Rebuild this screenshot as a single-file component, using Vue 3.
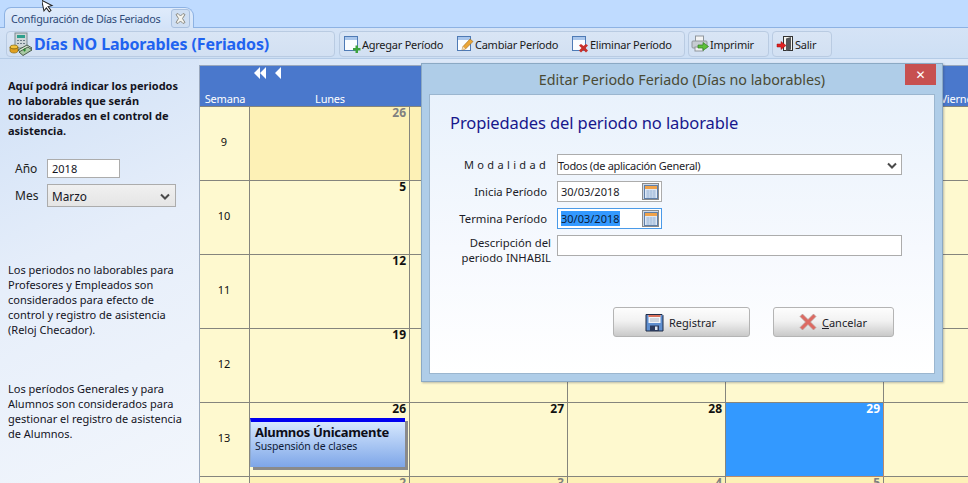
<script setup>
const o = (d) => ({ d, out: true })
const n = (d, extra = {}) => ({ d, ...extra })
const weeks = [
  { w: 9, days: [o(26), o(27), o(28), n(1), n(2)] },
  { w: 10, days: [n(5), n(6), n(7), n(8), n(9)] },
  { w: 11, days: [n(12), n(13), n(14), n(15), n(16)] },
  { w: 12, days: [n(19), n(20), n(21), n(22), n(23)] },
  { w: 13, days: [n(26, { ev: true }), n(27), n(28), n(29, { sel: true }), n(30)] },
  { w: 14, days: [o(2), o(3), o(4), o(5), o(6)] },
]
const heads = ['Lunes', 'Martes', 'Miércoles', 'Jueves', 'Viernes']
</script>

<template>
  <div class="page">
    <div class="tabstrip">
      <div class="tab">
        <span class="tabtext">Configuración de Días Feriados</span>
        <span class="tabclose">
          <svg width="13" height="13" viewBox="0 0 13 13"><path d="M2 2.500 4 1.500 6.500 4 9 1.500 11 2.500 8.500 6.500 11 10.500 9 11.500 6.500 9 4 11.500 2 10.500 4.500 6.500Z" fill="#f4f4ee" stroke="#8b8b85"/></svg>
        </span>
      </div>
    </div>

    <div class="toolbar">
      <div class="group g1">
        <svg class="logo" width="24" height="24" viewBox="0 0 24 24">
          <rect x="6" y="1" width="12" height="15" fill="#cfd6d8" stroke="#7b8b90"/>
          <rect x="8" y="3" width="8" height="3" fill="#2e9f8c"/>
          <path d="M8 8h2v1H8zM11 8h2v1h-2zM14 8h2v1h-2zM8 11h2v1H8zM11 11h2v1h-2zM14 11h2v1h-2z" fill="#6b7b88"/>
          <ellipse cx="5" cy="15" rx="4" ry="2" fill="#f3c33c" stroke="#8a6a10" stroke-width=".7"/>
          <path d="M1 15v4c0 1 2 2 4 2s4-1 4-2v-4c0 1-2 2-4 2s-4-1-4-2Z" fill="#e0a020" stroke="#8a6a10" stroke-width=".7"/>
          <path d="M9 18 18 13 23 16 14 22Z" fill="#d3e4cf" stroke="#4c5d4c"/>
          <path d="M10 20 19 15 23 18 14 23.500Z" fill="#a9c9a4" stroke="#4c5d4c"/>
          <path d="M15.500 16.500v3M14 18h3" stroke="#278a2f" stroke-width="1.200"/>
        </svg>
        <span class="brand">Días NO Laborables (Feriados)</span>
      </div>
      <div class="group g2">
        <div class="tool t1">
          <svg width="18" height="18" viewBox="0 0 18 18">
            <rect x="1.500" y="1.500" width="13" height="14" fill="#fbfdff" stroke="#4e7ab5"/>
            <rect x="2" y="2" width="12" height="3" fill="#a9c6ec"/>
            <path d="M10 13h2.500v-2.500h2.500V13h2.500v2.500H15V18h-2.500v-2.500H10Z" fill="#3da33d"/>
          </svg>
          <span>Agregar Período</span>
        </div>
        <div class="tool t2">
          <svg width="18" height="18" viewBox="0 0 18 18">
            <rect x="1.500" y="1.500" width="13" height="14" fill="#fbfdff" stroke="#4e7ab5"/>
            <rect x="2" y="2" width="12" height="3" fill="#a9c6ec"/>
            <path d="M6 15 7 11.500 14 4l3 2.500-7.500 7.500Z" fill="#eba637" stroke="#9a6a20" stroke-width=".6"/>
            <path d="M6 15 7 11.500 9.500 14Z" fill="#f3e0c0"/>
          </svg>
          <span>Cambiar Período</span>
        </div>
        <div class="tool t3">
          <svg width="18" height="18" viewBox="0 0 18 18">
            <rect x="1.500" y="1.500" width="13" height="14" fill="#fbfdff" stroke="#4e7ab5"/>
            <rect x="2" y="2" width="12" height="3" fill="#a9c6ec"/>
            <path d="M8 10.500 10 9l2.500 2L15 9l2 1.500-2.500 2.500 2.500 2.500L15 17.500 12.500 15 10 17.500 8 15.500l2.500-2.500Z" fill="#c9302a"/>
          </svg>
          <span>Eliminar Período</span>
        </div>
      </div>
      <div class="group g3">
        <div class="tool">
          <svg width="18" height="18" viewBox="0 0 18 18">
            <rect x="4.500" y="1" width="8" height="6" fill="#f4f4f4" stroke="#8f969c"/>
            <rect x="1" y="6" width="15" height="7" rx="1" fill="#c6ccd2" stroke="#8f969c"/>
            <rect x="4" y="12" width="8" height="4" fill="#f0f0f0" stroke="#8f969c"/>
            <path d="M7 10h5V7.500l5.500 4-5.500 4V13H7Z" fill="#5cc03a" stroke="#2f7d20" stroke-width=".7"/>
          </svg>
          <span>Imprimir</span>
        </div>
      </div>
      <div class="group g4">
        <div class="tool">
          <svg width="18" height="18" viewBox="0 0 18 18">
            <rect x="7.500" y="1.500" width="9" height="14" fill="#f5f5f0" stroke="#333"/>
            <path d="M10 3.500 15 2v12.500l-5 1.500Z" fill="#55575a"/>
            <path d="M1 9h4V6.500L10 10.500l-5 4V12H1Z" fill="#e02020" stroke="#9a1010" stroke-width=".5"/>
          </svg>
          <span>Salir</span>
        </div>
      </div>
    </div>

    <div class="main">
      <aside class="side">
        <p class="lead">Aquí podrá indicar los periodos no laborables que serán considerados en el control de asistencia.</p>
        <div class="frow anio">
          <label>Año</label>
          <div class="yearbox">2018</div>
        </div>
        <div class="frow">
          <label>Mes</label>
          <div class="monthbox">
            <span>Marzo</span>
            <svg width="10" height="7" viewBox="0 0 10 7"><path d="M1 1.500 5 5.500 9 1.500" fill="none" stroke="#4a4a4a" stroke-width="2"/></svg>
          </div>
        </div>
        <p class="note n1">Los periodos no laborables para Profesores y Empleados son considerados para efecto de control y registro de asistencia (Reloj Checador).</p>
        <p class="note n2">Los períodos Generales y para Alumnos son considerados para gestionar el registro de asistencia de Alumnos.</p>
      </aside>

      <section class="calendar">
        <div class="calhead">
          <div class="navrow">
            <svg width="28" height="12" viewBox="0 0 28 12">
              <path d="M6 0v12L0 6ZM12 0v12L6 6ZM27 0v12L21 6Z" fill="#fff"/>
            </svg>
          </div>
          <div class="headgrid">
            <div class="hcell">Semana</div>
            <div v-for="h in heads" :key="h" class="hcell">{{ h }}</div>
          </div>
        </div>
        <div class="grid">
          <template v-for="wk in weeks" :key="wk.w">
            <div class="cell weekno">{{ wk.w }}</div>
            <div
              v-for="c in wk.days"
              :key="wk.w + '-' + c.d"
              class="cell day"
              :class="{ out: c.out, sel: c.sel }"
            >
              <div class="num">{{ c.d }}</div>
              <div v-if="c.ev" class="event">
                <strong>Alumnos Únicamente</strong>
                <span>Suspensión de clases</span>
              </div>
            </div>
          </template>
        </div>
      </section>
    </div>

    <div class="modal">
      <header class="mtitle">
        <span>Editar Periodo Feriado (Días no laborables)</span>
        <button class="mclose">✕</button>
      </header>
      <div class="mbody">
        <h2>Propiedades del periodo no laborable</h2>
        <div class="form">
          <label class="spaced">M o d a l i d a d</label>
          <div class="field wide selectlike">
            <span>Todos (de aplicación General)</span>
            <svg width="10" height="7" viewBox="0 0 10 7"><path d="M1 1.500 5 5.500 9 1.500" fill="none" stroke="#4a4a4a" stroke-width="2"/></svg>
          </div>
          <label>Inicia Período</label>
          <div class="field date">
            <span>30/03/2018</span>
            <span class="calbtn">
              <svg width="14" height="14" viewBox="0 0 14 14"><rect x=".5" y=".5" width="13" height="13" fill="#dfe8f5" stroke="#5f7fa8"/><rect x="1" y="1" width="12" height="3" fill="#f0a24a"/><path d="M2 6h10M2 8h10M2 10h10M2 12h10M4 5v8M7 5v8M10 5v8" stroke="#9db7d8" stroke-width=".8"/></svg>
            </span>
          </div>
          <label>Termina Período</label>
          <div class="field date focus">
            <span class="selected">30/03/2018</span>
            <span class="calbtn">
              <svg width="14" height="14" viewBox="0 0 14 14"><rect x=".5" y=".5" width="13" height="13" fill="#dfe8f5" stroke="#5f7fa8"/><rect x="1" y="1" width="12" height="3" fill="#f0a24a"/><path d="M2 6h10M2 8h10M2 10h10M2 12h10M4 5v8M7 5v8M10 5v8" stroke="#9db7d8" stroke-width=".8"/></svg>
            </span>
          </div>
          <label class="desc">Descripción del<br>periodo INHABIL</label>
          <div class="field wide descfield"></div>
        </div>
        <div class="actions">
          <button class="btn reg">
            <svg width="19" height="19" viewBox="0 0 19 19">
              <path d="M1 1.500h16l1 1V18H1Z" fill="#5f8fd0" stroke="#1f2b45"/>
              <rect x="3.500" y="2" width="12" height="8" fill="#f3f5f8"/>
              <rect x="3.500" y="2" width="12" height="2" fill="#d9705a"/>
              <path d="M5 6h9M5 8h9" stroke="#a9b6c6"/>
              <rect x="5" y="12.500" width="9" height="5.500" fill="#2b3a5c"/>
              <rect x="10" y="13.500" width="2.500" height="3.500" fill="#dfe6f0"/>
            </svg>
            <span>Registrar</span>
          </button>
          <button class="btn can">
            <svg width="18" height="18" viewBox="0 0 18 18">
              <path d="M1 3.500 3.500 1 9 6.500 14.500 1 17 3.500 11.500 9 17 14.500 14.500 17 9 11.500 3.500 17 1 14.500 6.500 9Z" fill="#dd6a62" stroke="#b9a5a0" stroke-width=".7"/>
            </svg>
            <span><u>C</u>ancelar</span>
          </button>
        </div>
      </div>
    </div>

    <svg class="cursor" width="12" height="14" viewBox="0 0 12 14">
      <path d="M1 0v11l3-2.500 2 4.500 2-1-2-4.500h4Z" transform="rotate(-12 6 6) translate(0 -1)" fill="#fff" stroke="#222" stroke-width="1"/>
    </svg>
  </div>
</template>

<style scoped>
.page {
  position: relative;
  width: 968px;
  height: 483px;
  overflow: hidden;
  background: #dce8f8;
  font-family: "Noto Sans", "Open Sans", sans-serif;
  font-size: 11px;
  color: #111;
}
.tabstrip {
  height: 28px;
  box-sizing: border-box;
  padding: 7px 0 0 4px;
  background: #bfdbff;
  border-bottom: 1px solid #8db2e3;
  display: flex;
}
.tab {
  width: 190px;
  height: 21px;
  box-sizing: border-box;
  border: 1px solid #8db2e3;
  border-bottom: 0;
  border-radius: 7px 9px 0 0;
  background: linear-gradient(#dfebfb, #d3e3f8);
  color: #2e4a78;
  display: flex;
  align-items: center;
  justify-content: space-between;
  padding: 0 3px 0 6px;
  margin-bottom: -1px;
}
.tabtext {
  white-space: nowrap;
  letter-spacing: -.28px;
  font-size: 10.800px;
}
.tabclose {
  width: 17px;
  height: 17px;
  border: 1px solid #a9c0de;
  border-radius: 3px;
  background: #cfdff3;
  display: flex;
  align-items: center;
  justify-content: center;
}
.toolbar {
  height: 31px;
  box-sizing: border-box;
  padding: 3px 0 0 6px;
  background: linear-gradient(#d5e3f6, #cddff4);
  border-bottom: 1px solid #b4cbe6;
  display: flex;
  gap: 3px;
}
.group {
  height: 26px;
  box-sizing: border-box;
  border: 1px solid #b9cbe2;
  border-radius: 4px;
  background: linear-gradient(#d9e5f5, #d2e0f2);
  display: flex;
  align-items: center;
}
.g1 { width: 329px; padding-left: 2px; margin-right: 1px; gap: 1px; }
.g2 { width: 346px; padding-left: 3px; }
.g3 { width: 81px; padding-left: 2px; }
.g4 { width: 60px; padding-left: 3px; }
.brand {
  font-size: 16px;
  font-weight: 700;
  color: #1f63f0;
  white-space: nowrap;
  letter-spacing: -.12px;
}
.tool {
  display: flex;
  align-items: center;
  gap: 1px;
  white-space: nowrap;
  color: #1a1a1a;
  letter-spacing: -.25px;
}
.t1 { width: 113px; }
.t2 { width: 115px; }
.main {
  display: flex;
  height: 424px;
}
.side {
  width: 199px;
  flex: none;
  box-sizing: border-box;
  padding: 19px 8px 0 8px;
  background: linear-gradient(155deg, #cfe0f6 0%, #e6eefa 45%, #f2f6fc 100%);
  color: #14141e;
}
.lead {
  margin: 0 0 21px;
  font-weight: 700;
  line-height: 15px;
  font-size: 11px;
}
.frow {
  display: flex;
  align-items: center;
  margin-bottom: 6px;
}
.frow label {
  padding-left: 7px;
  flex: none;
  font-size: 12px;
  box-sizing: border-box;
  color: #222;
  width: 39px;
}
.yearbox {
  width: 73px;
  height: 19px;
  box-sizing: border-box;
  border: 1px solid #acacac;
  background: #fff;
  padding-left: 4px;
  line-height: 17px;
  font-size: 11px;
}
.monthbox {
  width: 129px;
  height: 23px;
  box-sizing: border-box;
  border: 1px solid #acacac;
  background: linear-gradient(#f0f0f0, #e5e5e5);
  padding: 1px 5px 0 4px;
  font-size: 11.800px;
  display: flex;
  align-items: center;
  justify-content: space-between;
}
.note {
  margin: 0;
  line-height: 15px;
  font-size: 11px;
}
.n1 { margin-top: 55px; }
.n2 { margin-top: 44px; }
.calendar {
  flex: 1;
  min-width: 0;
  margin-top: 6px;
  border-top: 1px solid #9aa8bd;
  border-left: 1px solid #9aa8bd;
  overflow: hidden;
}
.calhead {
  height: 40px;
  width: 1000px;
  box-sizing: border-box;
  background: #4a78cc;
  display: flex;
  flex-direction: column;
  justify-content: space-between;
  color: #fff;
}
.navrow {
  height: 14px;
  padding: 1px 0 0 54px;
}
.headgrid, .grid {
  display: grid;
  grid-template-columns: 50px 160px 158px 158px 158px 158px;
}
.hcell {
  text-align: center;
  line-height: 14px;
  font-size: 11px;
  letter-spacing: -.2px;
}
.hcell:last-child { padding-right: 8px; }
.grid {
  grid-auto-rows: 74px;
  border-top: 1px solid #85857a;
}
.cell {
  box-sizing: border-box;
  border-right: 1px solid #85857d;
  border-bottom: 1px solid #85857d;
  background: #fef9cf;
}
.weekno {
  display: flex;
  align-items: center;
  justify-content: center;
  padding: 0 1px 4px 0;
}
.day {
  padding: 0 3px 0 0;
  min-width: 0;
}
.day.out { background: #fdf1b6; }
.day.out .num { color: #808080; }
.day.sel {
  background: #3399ff;
  border-color: #b98a6a;
}
.day.sel .num { color: #fff; }
.num {
  text-align: right;
  font-weight: 700;
  font-size: 12px;
  line-height: 12px;
}
.event {
  height: 49px;
  width: 155px;
  margin-top: 3px;
  box-sizing: border-box;
  border-top: 4px solid #0000f0;
  border-left: 1px solid #8faad0;
  background: linear-gradient(#d6e8fe, #7ea6e8);
  box-shadow: 3px 3px 0 #8a8a8a;
  padding: 2px 0 0 4px;
  display: flex;
  flex-direction: column;
  color: #0f1a35;
}
.event strong {
  font-size: 13px;
  line-height: 16px;
  white-space: nowrap;
  color: #0d0d18;
  letter-spacing: -.3px;
}
.event span {
  font-size: 10.500px;
  line-height: 13px;
  white-space: nowrap;
  letter-spacing: -.1px;
}
.modal {
  position: absolute;
  left: 421px;
  top: 63px;
  width: 522px;
  height: 319px;
  box-sizing: border-box;
  background: #afcde8;
  border: 1px solid #8ba9c4;
  padding: 0 7px 7px 7px;
  display: flex;
  flex-direction: column;
  box-shadow: 1px 1px 2px rgba(60, 70, 90, .35);
}
.mtitle {
  height: 30px;
  flex: none;
  display: flex;
  align-items: center;
  justify-content: center;
  position: relative;
  font-size: 14.300px;
  color: #4a4a34;
}
.mclose {
  position: absolute;
  right: -1px;
  top: 0;
  width: 31px;
  height: 21px;
  border: 0;
  padding: 0;
  background: #c75050;
  color: #fff;
  font-size: 12px;
  font-weight: 700;
  font-family: "DejaVu Sans", sans-serif;
}
.mbody {
  flex: 1;
  min-height: 0;
  box-sizing: border-box;
  border: 1px solid #9bb6cf;
  background: linear-gradient(#e9f2fc, #f6f9fe 55%, #ffffff);
  padding: 16px 0 0 20px;
}
.mbody h2 {
  margin: 0;
  font-size: 16.500px;
  letter-spacing: -.1px;
  font-weight: 400;
  line-height: 24px;
  color: #17178c;
}
.form {
  display: grid;
  grid-template-columns: 101px auto;
  column-gap: 6px;
  row-gap: 6px;
  justify-content: start;
  align-items: center;
  margin-top: 19px;
  color: #1c1c28;
}
.form label {
  text-align: right;
  white-space: nowrap;
  line-height: 15px;
  padding-right: 4px;
  font-size: 11.300px;
}
.form label.spaced {
  padding-right: 0;
  margin-right: 5px;
  letter-spacing: .25px;
  font-size: 11px;
}
.form label.desc {
  align-self: start;
  padding-right: 0;
}
.field {
  height: 21px;
  box-sizing: border-box;
  border: 1px solid #acacac;
  background: #fff;
  display: flex;
  align-items: center;
  justify-content: space-between;
  padding: 0 3px;
  font-size: 11px;
}
.descfield { align-self: start; }
.wide { width: 345px; }
.selectlike {
  padding: 1px 4px 0 0;
  letter-spacing: -.3px;
}
.date {
  width: 105px;
  font-size: 11px;
  padding-right: 2px;
}
.focus { border-color: #4a9ae8; }
.selected {
  background: #3399ff;
  color: #0c1d3a;
}
.calbtn {
  width: 17px;
  height: 17px;
  box-sizing: border-box;
  border: 1px solid #8a8a8a;
  background: #cdd9e8;
  display: flex;
  align-items: center;
  justify-content: center;
}
.actions {
  display: flex;
  margin: 42px 0 0 163px;
  gap: 23px;
}
.btn {
  height: 30px;
  box-sizing: border-box;
  border: 1px solid #b4b4b4;
  border-radius: 3px;
  background: linear-gradient(#fdfdfd, #f2f2f2 45%, #e4e4e4 65%, #c9c9c9);
  display: flex;
  align-items: center;
  justify-content: flex-start;
  gap: 5px;
  font-family: inherit;
  font-size: 11px;
  color: #1c1c28;
}
.reg { width: 137px; padding: 0 0 0 31px; }
.can { width: 121px; padding: 0 0 0 25px; }
.cursor {
  position: absolute;
  left: 42px;
  top: 0;
}
</style>
